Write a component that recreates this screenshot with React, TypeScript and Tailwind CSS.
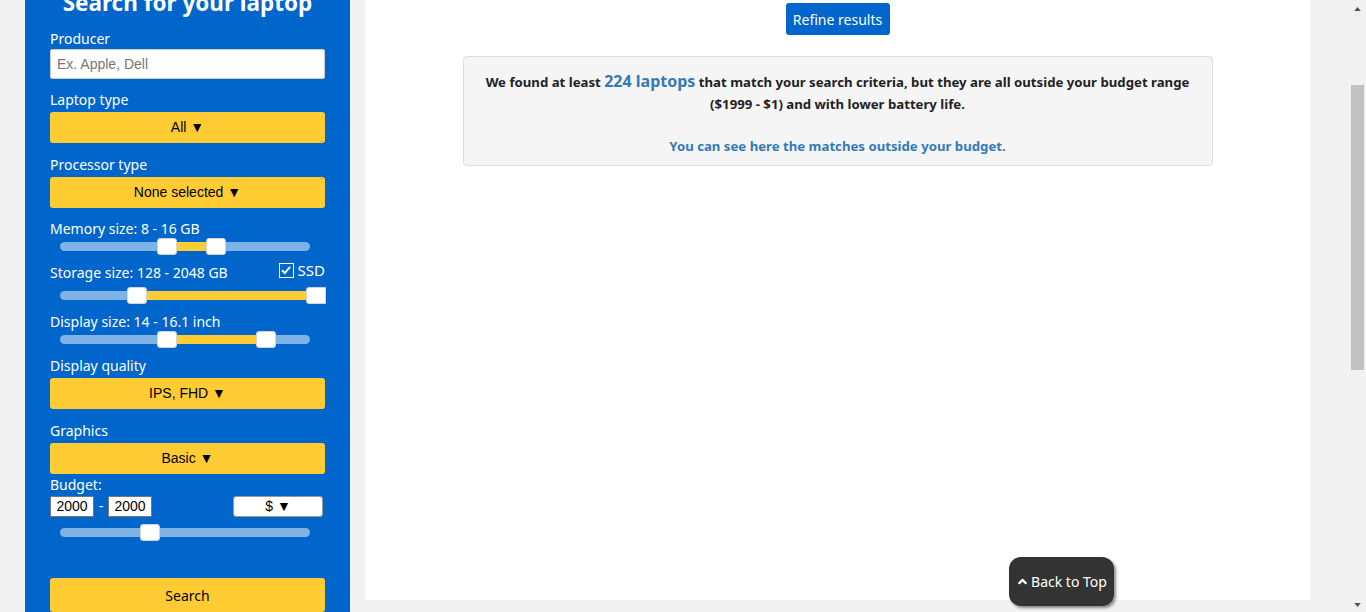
import { ChevronUp } from "lucide-react";

const ui = "font-['Noto_Sans',sans-serif]";
const arial = "font-['Liberation_Sans',Arial,sans-serif]";

const Label = ({ children, className = "" }: { children: React.ReactNode; className?: string }) => (
    <div className={`text-[14px] text-white ${ui} ${className}`}>{children}</div>
);

const YellowSelect = ({ text, className = "" }: { text: string; className?: string }) => (
    <div className={`h-[31px] w-full rounded-[3px] bg-[#ffcc33] flex items-center justify-center text-[14px] text-black ${arial} ${className}`}>
        {text} ▼
    </div>
);

type Range = { low: string; high?: string; fill?: string };

const Slider = ({ low, high, fill, wide = false, className = "" }: Range & { wide?: boolean; className?: string }) => (
    <div className={`relative h-[17px] ml-[10px] w-[250px] ${className}`}>
        <div className="absolute left-0 right-0 top-[4px] h-[9px] rounded-full bg-[#7fb2e5]" />
        {fill && <div className={`absolute top-[4px] h-[9px] bg-[#ffcc33] ${fill}`} />}
        <div className={`absolute top-0 h-[17px] w-[20px] rounded-[3px] bg-white border border-[#d3d3d3] ${low}`} />
        {high && <div className={`absolute top-0 h-[17px] w-[20px] rounded-[3px] bg-white border border-[#d3d3d3] ${high} ${wide ? "rounded-r-none" : ""}`} />}
    </div>
);

const Sidebar = () => (
    <aside className="w-[325px] shrink-0 bg-[#0066cc] px-[25px] flex flex-col">
        <h1 className={`-mt-[13px] h-[32px] leading-[32px] text-center text-[22.5px] font-bold text-white ${ui}`}>
            Search for your laptop
        </h1>
        <Label className="mt-[10px] leading-[20px]">Producer</Label>
        <input
            className={`h-[30px] w-full rounded-[2px] border border-[#ccc] bg-white px-[6px] text-[14px] text-black placeholder:text-[#777] outline-none ${arial}`}
            placeholder="Ex. Apple, Dell"
        />
        <Label className="mt-[11px] leading-[20px]">Laptop type</Label>
        <YellowSelect text="All" className="mt-[2px]" />
        <Label className="mt-[12px] leading-[20px]">Processor type</Label>
        <YellowSelect text="None selected" className="mt-[2px]" />

        <Label className="mt-[12px] leading-[18px]">Memory size: 8 - 16 GB</Label>
        <Slider low="left-[97px]" high="left-[146px]" fill="left-[107px] w-[49px]" />

        <div className="mt-[9px] flex items-start justify-between">
            <Label className="leading-[18px]">Storage size: 128 - 2048 GB</Label>
            <label className={`-mt-[5px] flex items-center gap-[4px] text-[15px] text-white ${ui}`}>
                <span className="h-[15px] w-[15px] border border-white bg-[#0066cc] flex items-center justify-center">
                    <svg viewBox="0 0 12 12" className="h-[12px] w-[12px]">
                        <path d="M2 6.3 L4.8 9 L10 2.8" fill="none" stroke="white" strokeWidth="1.9" />
                    </svg>
                </span>
                SSD
            </label>
        </div>
        <Slider low="left-[67px]" high="left-[246px]" fill="left-[77px] w-[180px]" wide className="mt-[5px]" />

        <Label className="mt-[9px] leading-[18px]">Display size: 14 - 16.1 inch</Label>
        <Slider low="left-[97px]" high="left-[196px]" fill="left-[107px] w-[99px]" />

        <Label className="mt-[8px] leading-[20px]">Display quality</Label>
        <YellowSelect text="IPS, FHD" className="mt-[2px]" />
        <Label className="mt-[12px] leading-[20px]">Graphics</Label>
        <YellowSelect text="Basic" className="mt-[2px]" />

        <Label className="mt-[2px] leading-[18px]">Budget:</Label>
        <div className="mt-[2px] flex items-center h-[21px]">
            <div className={`h-[21px] w-[44px] border border-[#767676] bg-white text-[14px] text-black flex items-center justify-center ${arial}`}>2000</div>
            <span className={`w-[14px] text-center text-white text-[14px] ${arial}`}>-</span>
            <div className={`h-[21px] w-[44px] border border-[#767676] bg-white text-[14px] text-black flex items-center justify-center ${arial}`}>2000</div>
            <div className={`ml-auto mr-[2px] h-[21px] w-[90px] rounded-[3px] border border-[#999] bg-white text-[14px] text-black flex items-center justify-center ${arial}`}>$ ▼</div>
        </div>
        <Slider low="left-[80px]" className="mt-[7px]" />

        <button className={`mt-[37px] h-[34px] shrink-0 w-full rounded-[3px] bg-[#ffcc33] text-[14px] text-black ${ui}`}>
            Search
        </button>
    </aside>
);

const Results = () => (
    <main className="relative w-[945px] h-[600px] shrink-0 bg-white flex flex-col items-center">
        <button className={`mt-[3px] h-[32px] w-[104px] rounded-[3px] bg-[#0066cc] text-[14px] text-white ${ui}`}>
            Refine results
        </button>
        <div className={`mt-[21px] w-[750px] rounded-[4px] border border-[#ddd] bg-[#f5f5f5] pt-[14px] pb-[8px] text-center text-[13.2px] font-bold text-[#222] ${ui}`}>
            <p className="leading-[22px] px-[15px]">
                We found at least <span className="text-[16px] leading-[20px] text-[#337ab7]">224 laptops</span> that match your
                search criteria, but they are all outside your budget range ($1999 - $1) and with lower battery life.
            </p>
            <p className="mt-[20px] leading-[22px] text-[#337ab7]">You can see here the matches outside your budget.</p>
        </div>
        <button className={`absolute left-[644px] top-[557px] h-[49px] w-[105px] rounded-[12px] bg-[#333] text-white text-[14px] shadow-[2px_2px_3px_rgba(0,0,0,0.45)] flex items-center justify-center gap-[2px] ${ui}`}>
            <ChevronUp size={13} strokeWidth={4} />
            Back to Top
        </button>
    </main>
);

const Scrollbar = () => (
    <div className="w-[17px] h-full bg-[#f1f1f1] flex flex-col items-center">
        <svg viewBox="0 0 8 5" className="mt-[7px] h-[4px] w-[7px]"><path d="M0 5 L4 0 L8 5Z" fill="#505050" /></svg>
        <div className="mt-[74px] h-[285px] w-[13px] bg-[#c1c1c1]" />
        <svg viewBox="0 0 8 5" className="mt-auto mb-[5px] h-[4px] w-[7px]"><path d="M0 0 L4 5 L8 0Z" fill="#505050" /></svg>
    </div>
);

export default function App() {
    return (
        <div className="h-[612px] w-[1366px] overflow-hidden bg-[#f1f1f1] flex">
            <div className="w-[25px] shrink-0" />
            <Sidebar />
            <div className="w-[15px] shrink-0" />
            <Results />
            <div className="flex-1" />
            <Scrollbar />
        </div>
    );
}
